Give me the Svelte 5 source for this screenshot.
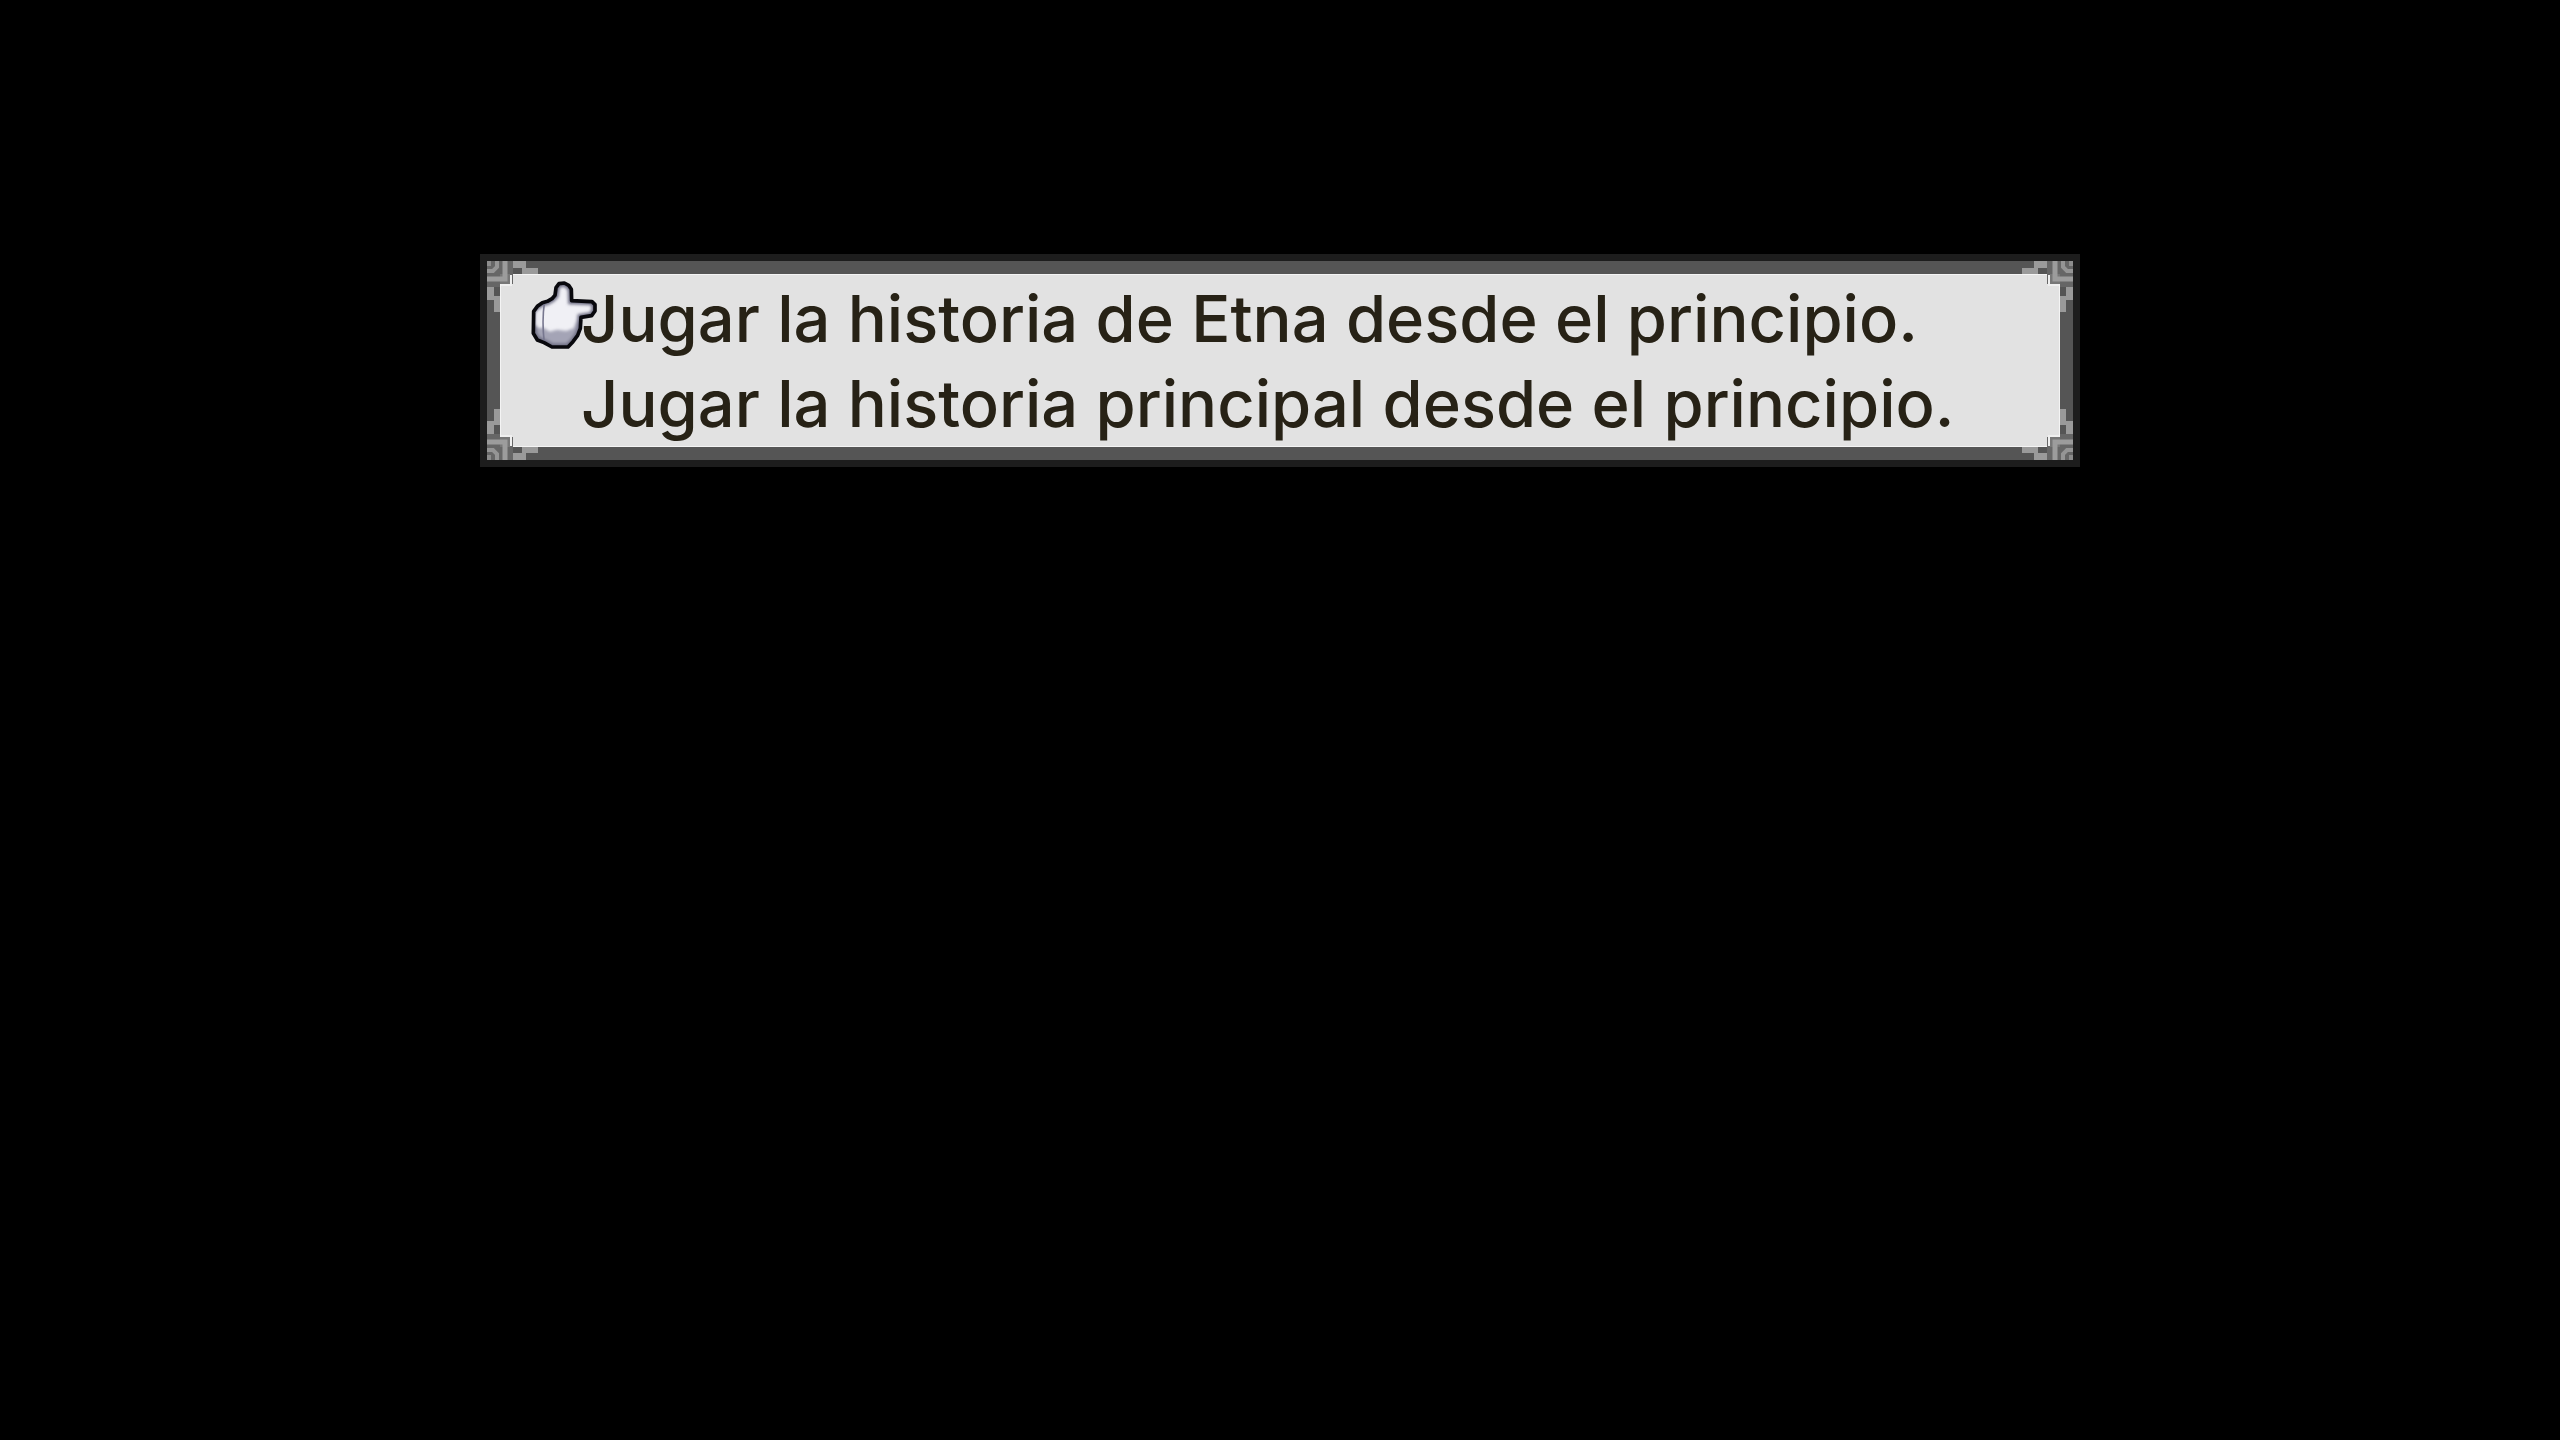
<script lang="ts">
	const options = [
		'Jugar la historia de Etna desde el principio.',
		'Jugar la historia principal desde el principio.'
	];
	const corners = ['top-left', 'top-right', 'bottom-left', 'bottom-right'];
	const hand =
		'M14 91 L25 76 L40 65 L55 61 L69 53 L78 43 L81 20 L90 8 L106 6 L119 13 L127 25 L128 59 L189 62 L198 71 L198 90 L188 104 L156 109 L154 142 L146 163 L132 182 L117 198 L69 198 L45 185 L25 177 L13 157 Z';

	let selected = $state(0);
</script>

<main>
	<nav class="frame" aria-label="Historia">
		<div class="panel">
			{#each options as option, i}
				<button class="option" onclick={() => (selected = i)} onfocus={() => (selected = i)}>
					{#if selected === i}
						<svg class="cursor" viewBox="0 0 210 210" aria-hidden="true">
							<defs>
								<clipPath id="hand-clip"><path d={hand} /></clipPath>
								<filter id="soft" x="-20%" y="-20%" width="140%" height="140%">
									<feGaussianBlur stdDeviation="4" />
								</filter>
							</defs>
							<path d={hand} fill="#f0f0f5" />
							<g clip-path="url(#hand-clip)">
								<g filter="url(#soft)">
									<path d="M0 140 H44 L62 152 L84 146 L112 150 L134 142 L146 112 H170 V210 H0 Z" fill="#a4a4b6" />
									<path d="M0 176 L44 180 L66 190 H120 L150 158 L170 120 V210 H0 Z" fill="#77778c" />
									<path d={hand} fill="none" stroke="#707085" stroke-width="22" />
								</g>
								<path d="M46 68 Q38 118 46 188" fill="none" stroke="#77778f" stroke-width="5" />
								<path d="M20 96 L36 80 L34 134 H20 Z" fill="#ececf2" filter="url(#soft)" />
							</g>
							<path d={hand} fill="none" stroke="#08080d" stroke-width="11" stroke-linejoin="round" />
						</svg>
					{/if}
					{option}
				</button>
			{/each}
		</div>
		{#each corners as corner}
			<svg class="corner {corner}" viewBox="0 0 52 52" aria-hidden="true">
				<path d="M0 0 H26 V23 H13 V26 H0 Z" fill="#666" />
				<path d="M13 13 H23 V23 H13 Z" fill="#777" />
				<path d="M0 18 H18 V0" fill="none" stroke="#9c9c9c" stroke-width="5" />
				<path d="M0 10 H6 L10 6 V0" fill="none" stroke="#959595" stroke-width="4" />
				<path d="M0 0 H4 V5 H0 Z" fill="#8c8c8c" />
				<path d="M26 0 H39 V7 H51 V13 H35 V7 H26 Z" fill="#9a9a9a" />
				<path d="M0 26 V39 H7 V51 H13 V35 H7 V26 Z" fill="#9a9a9a" />
				<path d="M24 14 V24 H14" fill="none" stroke="#efefef" stroke-width="2" />
			</svg>
		{/each}
	</nav>
</main>

<style>
	:global(body) {
		margin: 0;
		background: #000;
	}

	main {
		display: flex;
		justify-content: center;
		padding: 254px 0 24px;
	}

	.frame {
		position: relative;
		box-sizing: border-box;
		width: 62.5%;
		padding: 13px;
		border: 7px solid #1d1d1d;
		background: #555;
	}

	.panel {
		display: flex;
		flex-direction: column;
		box-sizing: border-box;
		padding: 1px 80px 0;
		border: 1px solid #f4f4f4;
		background: #e2e2e2;
	}

	.option {
		position: relative;
		padding: 0;
		border: 0;
		background: none;
		color: #272216;
		font-family: Inter, sans-serif;
		font-size: 65px;
		font-weight: 500;
		line-height: 85px;
		text-align: left;
		white-space: nowrap;
		cursor: pointer;
		outline: none;
	}

	.cursor {
		position: absolute;
		top: 5px;
		left: -52px;
		width: 70px;
		height: 70px;
	}

	.corner {
		position: absolute;
		width: 52px;
		height: 52px;
	}

	.top-left {
		top: 0;
		left: 0;
	}

	.top-right {
		top: 0;
		right: 0;
		transform: scaleX(-1);
	}

	.bottom-left {
		bottom: 0;
		left: 0;
		transform: scaleY(-1);
	}

	.bottom-right {
		right: 0;
		bottom: 0;
		transform: scale(-1);
	}
</style>
